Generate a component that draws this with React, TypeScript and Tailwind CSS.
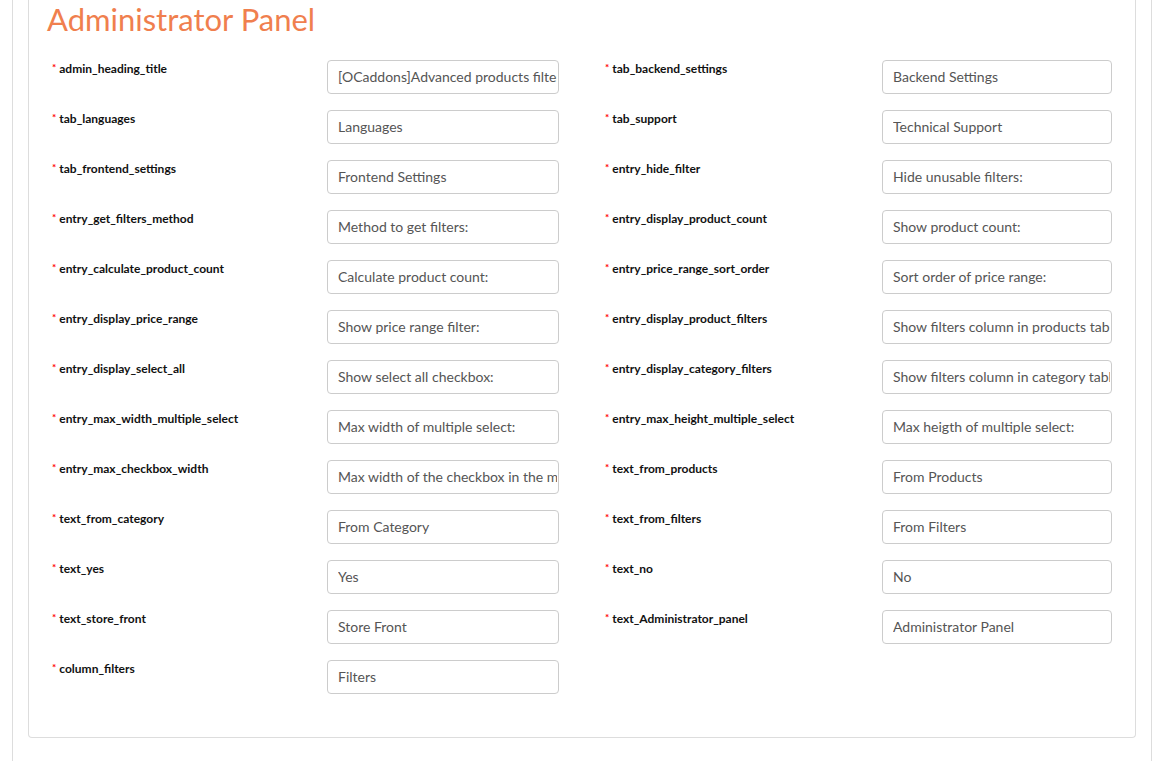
const left: [string, string][] = [
  ['admin_heading_title', '[OCaddons]Advanced products filter'],
  ['tab_languages', 'Languages'],
  ['tab_frontend_settings', 'Frontend Settings'],
  ['entry_get_filters_method', 'Method to get filters:'],
  ['entry_calculate_product_count', 'Calculate product count:'],
  ['entry_display_price_range', 'Show price range filter:'],
  ['entry_display_select_all', 'Show select all checkbox:'],
  ['entry_max_width_multiple_select', 'Max width of multiple select:'],
  ['entry_max_checkbox_width', 'Max width of the checkbox in the menu:'],
  ['text_from_category', 'From Category'],
  ['text_yes', 'Yes'],
  ['text_store_front', 'Store Front'],
  ['column_filters', 'Filters']
]

const right: [string, string][] = [
  ['tab_backend_settings', 'Backend Settings'],
  ['tab_support', 'Technical Support'],
  ['entry_hide_filter', 'Hide unusable filters:'],
  ['entry_display_product_count', 'Show product count:'],
  ['entry_price_range_sort_order', 'Sort order of price range:'],
  ['entry_display_product_filters', 'Show filters column in products table:'],
  ['entry_display_category_filters', 'Show filters column in category table:'],
  ['entry_max_height_multiple_select', 'Max heigth of multiple select:'],
  ['text_from_products', 'From Products'],
  ['text_from_filters', 'From Filters'],
  ['text_no', 'No'],
  ['text_Administrator_panel', 'Administrator Panel']
]

function Field({ name, value, labelW, inputW }: { name: string; value: string; labelW: string; inputW: string }) {
  return (
    <div className="flex items-start mb-[16px]">
      <label className={`${labelW} shrink-0 text-[12px] leading-[17px] font-bold text-[#111]`}>
        <span className="text-[#f00] text-[10px] align-top leading-[14px] mr-[3px]">*</span>
        {name}
      </label>
      <input
        readOnly
        value={value}
        className={`${inputW} h-[34px] border border-[#ccc] rounded-[4px] pl-[10px] pr-[1px] pb-[2px] text-[14px] text-[#555] bg-white outline-none`}
      />
    </div>
  )
}

export default function App() {
  return (
    <div className="min-h-screen bg-white" style={{ fontFamily: 'Lato, "Open Sans", sans-serif' }}>
      <div className="ml-[12px] w-[1140px] min-h-screen border-x border-[#ddd] px-[15px]">
        <div className="border border-t-0 border-[#ddd] rounded-b-[4px] px-[18px] pt-[1px] pb-[27px]">
          <h1 className="text-[31px] leading-[36px] text-[#f07f4e] font-normal">Administrator Panel</h1>
          <div className="flex gap-[46px] ml-[5px] mt-[23px]">
            <div className="w-[507px]">
              {left.map(([n, v]) => (
                <Field key={n} name={n} value={v} labelW="w-[275px]" inputW="w-[232px]" />
              ))}
            </div>
            <div className="w-[507px]">
              {right.map(([n, v]) => (
                <Field key={n} name={n} value={v} labelW="w-[277px]" inputW="w-[230px]" />
              ))}
            </div>
          </div>
        </div>
      </div>
    </div>
  )
}
